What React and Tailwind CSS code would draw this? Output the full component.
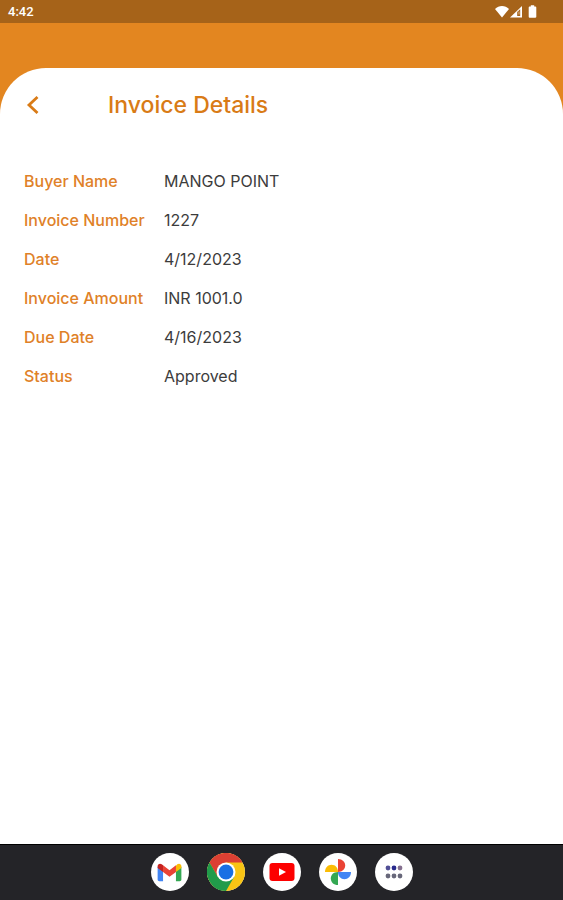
import React from "react";

const invoice = [
  { label: "Buyer Name", value: "MANGO POINT" },
  { label: "Invoice Number", value: "1227" },
  { label: "Date", value: "4/12/2023" },
  { label: "Invoice Amount", value: "INR 1001.0" },
  { label: "Due Date", value: "4/16/2023" },
  { label: "Status", value: "Approved" },
];

function StatusBar() {
  return (
    <div className="h-[23px] shrink-0 bg-[#a66319] px-2 flex items-center justify-between text-white">
      <span className="font-['Roboto',sans-serif] text-[13px] leading-none font-medium">
        4:42
      </span>
      <div className="flex items-center gap-px mr-4">
        <svg width="14" height="14" viewBox="0 0 14 14" fill="currentColor">
          <path d="M7 12.5 0 3.9C1.9 2.1 4.4 1 7 1s5.1 1.1 7 2.9z" />
        </svg>
        <svg width="13" height="14" viewBox="0 0 13 14">
          <path d="M0 12.5 12 1v11.5z" fill="#fff" />
          <path d="M7.2 11V7.1l3-2.8V11z" fill="#a66319" />
          <path d="M9 6.5v3" stroke="#e7cdb0" strokeWidth="0.8" />
        </svg>
        <svg
          width="11"
          height="14"
          viewBox="0 0 11 14"
          fill="currentColor"
          className="ml-1"
        >
          <path d="M2.8 0.2h3.4v1.4h1.2c.5 0 .9.4.9.9v9.3c0 .5-.4.9-.9.9H1.6c-.5 0-.9-.4-.9-.9V2.5c0-.5.4-.9.9-.9h1.2z" />
        </svg>
      </div>
    </div>
  );
}

function GmailIcon() {
  return (
    <svg width="25" height="19" viewBox="0 0 26 20">
      <path d="M0.5 4v13.4c0 1 .8 1.8 1.8 1.8h3.9V8.5z" fill="#4285f4" />
      <path d="M25.5 4v13.4c0 1-.8 1.8-1.8 1.8h-3.9V8.5z" fill="#34a853" />
      <path d="M19.8 2.8v6.6l5.7-4.2V3.4c0-2.5-2.6-3.3-4.3-2z" fill="#fbbc04" />
      <path d="M6.2 9.4V2.4L13 7.6l6.8-5.2v7L13 14.5z" fill="#ea4335" />
      <path d="M0.5 3.4v1.8l5.7 4.2v-7l-1.4-1C3.1.1.5.9.5 3.4z" fill="#c5221f" />
    </svg>
  );
}

function ChromeIcon() {
  return (
    <svg width="38" height="38" viewBox="0 0 38 38">
      <circle cx="19" cy="19" r="19" fill="#f9c414" />
      <path d="M2.5 9.5A19 19 0 0 1 35.5 9.5H19L10.8 23.8z" fill="#dc4033" />
      <path d="M2.5 9.5A19 19 0 0 0 19 38l8.2-14.3H10.8z" fill="#219b4a" />
      <circle cx="19" cy="19" r="9.5" fill="#fff" />
      <circle cx="19" cy="19" r="7.4" fill="#1a6fe4" />
    </svg>
  );
}

function YoutubeIcon() {
  return (
    <svg width="26" height="18" viewBox="0 0 26 18">
      <rect x="0.5" width="25" height="18" rx="3" fill="#fd0000" />
      <path d="M10 5.3v7.4L17 9z" fill="#fff" />
    </svg>
  );
}

function PhotosIcon() {
  return (
    <svg width="28" height="28" viewBox="0 0 28 28">
      <path d="M14 1c4.4 0 7.2 3 7.2 6.6S18.400 14 14 14z" fill="#ea4335" />
      <path d="M27 14c0 4.400-3 7.200-6.600 7.200S14 18.400 14 14z" fill="#4285f4" />
      <path d="M14 27c-4.400 0-7.200-3-7.200-6.600S9.600 14 14 14z" fill="#34a853" />
      <path d="M1 14c0-4.400 3-7.200 6.600-7.200S14 9.600 14 14z" fill="#fbbc04" />
    </svg>
  );
}

function AppsIcon() {
  return (
    <svg width="20" height="14" viewBox="0 0 20 14">
      <circle cx="4" cy="3" r="2.4" fill="#514f96" />
      <circle cx="10" cy="3" r="2.4" fill="#292a8c" />
      <circle cx="16" cy="3" r="2.4" fill="#85708f" />
      <circle cx="4" cy="11" r="2.4" fill="#67677a" />
      <circle cx="10" cy="11" r="2.4" fill="#67677a" />
      <circle cx="16" cy="11" r="2.4" fill="#67677a" />
    </svg>
  );
}

const apps = [
  { name: "Gmail", Icon: GmailIcon },
  { name: "Chrome", Icon: ChromeIcon },
  { name: "YouTube", Icon: YoutubeIcon },
  { name: "Photos", Icon: PhotosIcon },
  { name: "All apps", Icon: AppsIcon },
];

export default function App() {
  return (
    <div className="min-h-screen flex flex-col bg-[#e38620] font-['Inter',sans-serif]">
      <StatusBar />

      <main className="flex-1 mt-[45px] rounded-t-[46px] bg-white px-6 pt-[15px]">
        <header className="flex items-center h-11">
          <button aria-label="Back" className="w-[84px] text-[#d97b16]">
            <svg
              width="18"
              height="20"
              viewBox="0 0 18 20"
              fill="none"
              stroke="currentColor"
              strokeWidth="2.8"
            >
              <path d="M13.5 2 5 10l8.5 8" />
            </svg>
          </button>
          <h1 className="text-[23px] leading-7 font-medium text-[#d97b16]">
            Invoice Details
          </h1>
        </header>

        {/* Invoice fields */}
        <dl className="mt-[34px]">
          {invoice.map((item) => (
            <div key={item.label} className="flex items-center h-[39px]">
              <dt className="w-[140px] text-base font-medium text-[#df8128]">
                {item.label}
              </dt>
              <dd className="text-base text-[#3c3c3c]">{item.value}</dd>
            </div>
          ))}
        </dl>
      </main>

      {/* Taskbar */}
      <nav className="h-14 shrink-0 bg-[#242428] border-t border-black pb-px flex items-center justify-center gap-[18px]">
        {apps.map(({ name, Icon }) => (
          <button
            key={name}
            aria-label={name}
            className="size-[38px] rounded-full bg-white flex items-center justify-center"
          >
            <Icon />
          </button>
        ))}
      </nav>
    </div>
  );
}
